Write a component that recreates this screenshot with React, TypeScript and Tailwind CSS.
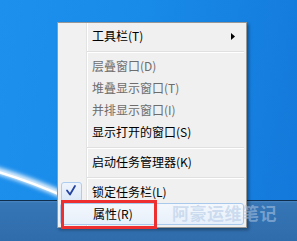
import React from "react";

type Item =
  | { sep: true }
  | { sep?: false; t: string; disabled?: boolean; arrow?: boolean; checked?: boolean; hover?: boolean };

const items: Item[] = [
  { t: "工具栏(T)", arrow: true },
  { sep: true },
  { t: "层叠窗口(D)", disabled: true },
  { t: "堆叠显示窗口(T)", disabled: true },
  { t: "并排显示窗口(I)", disabled: true },
  { t: "显示打开的窗口(S)" },
  { sep: true },
  { t: "启动任务管理器(K)" },
  { sep: true },
  { t: "锁定任务栏(L)", checked: true },
  { t: "属性(R)", hover: true },
];

export default function App() {
  return (
    <div
      className="relative w-[297px] h-[241px] overflow-hidden flex flex-col"
      style={{ fontFamily: '"Noto Sans CJK SC", "Noto Sans", sans-serif' }}
    >
      {/* desktop */}
      <div className="relative h-[200px] bg-[linear-gradient(100deg,#1d90ee_0%,#188ae8_45%,#1479da_100%)]">
        <svg className="absolute left-0 top-0" width="297" height="200" viewBox="0 0 297 200">
          <defs>
            <filter id="glow" x="-20%" y="-50%" width="140%" height="200%">
              <feGaussianBlur stdDeviation="2.2" />
            </filter>
          </defs>
          <path d="M-5 170 Q 30 180 70 198" stroke="#ffffff" strokeWidth="7" fill="none" filter="url(#glow)" opacity="0.9" />
          <path d="M-5 171 Q 30 181 70 199" stroke="#ffffff" strokeWidth="2.5" fill="none" />
        </svg>
      </div>
      {/* taskbar */}
      <div className="flex-1 border-t border-[#0f2d4d] bg-[linear-gradient(to_bottom,#4a86c2_0px,#3676b6_2px,#2f6cac_100%)]" />

      {/* context menu */}
      <div className="absolute left-[57px] top-[22px] w-[190px] border border-[#979797] p-[2px] shadow-[2px_2px_3px_rgba(0,0,0,0.35)] bg-[linear-gradient(to_right,#f1f1f1_28px,#e2e3e3_28px,#e2e3e3_29px,#ffffff_29px,#ffffff_30px,#f0f0f0_30px)] text-[12px]">
        {items.map((it, i) =>
          it.sep ? (
            <div key={i} className="h-[8px] pt-[4px] pl-[27px]">
              <div className="h-[1px] bg-[#e0e0e0]" />
              <div className="h-[1px] bg-white" />
            </div>
          ) : (
            <div
              key={i}
              className={
                "relative h-[22px] flex items-center justify-between pl-[32px] pr-[9px] leading-[22px] " +
                (it.hover
                  ? "rounded-[3px] border border-[#a8c9ec] bg-[linear-gradient(to_bottom,#f4f8fd,#e6effa)] pl-[31px] pr-[8px]"
                  : "") +
                (it.disabled ? " text-[#6d6d6d]" : " text-black")
              }
            >
              {it.checked && (
                <div className="absolute left-[1px] top-[1px] w-[21px] h-[20px] rounded-[3px] border border-[#aecbf0] bg-[linear-gradient(to_bottom,#eef4fc,#dce8f8)]">
                  <svg width="21" height="20" viewBox="0 0 21 20" className="absolute left-[-1px] top-[-1px]">
                    <path d="M6 8.5 L9 12.5 L14 4" stroke="#2443a0" strokeWidth="1.8" fill="none" strokeLinecap="round" strokeLinejoin="round" />
                  </svg>
                </div>
              )}
              <span>{it.t}</span>
              {it.arrow && (
                <svg width="4" height="7" viewBox="0 0 4 7">
                  <polygon points="0,0 4,3.5 0,7" fill="#000" />
                </svg>
              )}
            </div>
          )
        )}
      </div>

      {/* watermark */}
      <div className="absolute left-[172px] top-[202px] text-[17px] font-bold leading-[22px] tracking-[0.5px] text-[rgba(175,198,228,0.55)]">
        阿豪运维笔记
      </div>

      {/* red annotation box */}
      <div className="absolute left-[61px] top-[200px] w-[96px] h-[29px] border-[3px] border-[#ee2f2f]" />
    </div>
  );
}
